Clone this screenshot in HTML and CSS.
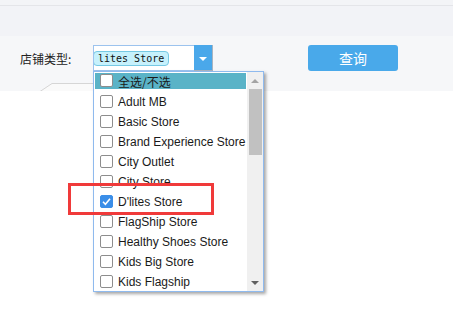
FILE: index.html
```html
<!DOCTYPE html>
<html>
<head>
  <title>店铺类型</title>
  <link rel="stylesheet" href="styles.css">
</head>
<body>
  <div class="topbar"><div class="topbarInner"></div></div>

  <div class="filter">
    <div class="filterRow">
      <span class="label">店铺类型:</span>
      <div class="select">
        <div class="selectInput"><span class="tag">lites Store</span></div>
        <div class="selectBtn"><span class="arrowDown"></span></div>

        <div class="dropdown">
          <ul class="options">
            <li class="all"><span class="box"></span>全选/不选</li>
            <li><span class="box"></span>Adult MB</li>
            <li><span class="box"></span>Basic Store</li>
            <li><span class="box"></span>Brand Experience Store</li>
            <li><span class="box"></span>City Outlet</li>
            <li><span class="box"></span>City Store</li>
            <li><span class="box checked"><svg width="13" height="13" viewBox="0 0 13 13"><path d="M3 6.8 L5.4 9.2 L10 3.8" fill="none" stroke="#fff" stroke-width="1.6"/></svg></span>D'lites Store</li>
            <li><span class="box"></span>FlagShip Store</li>
            <li><span class="box"></span>Healthy Shoes Store</li>
            <li><span class="box"></span>Kids Big Store</li>
            <li><span class="box"></span>Kids Flagship</li>
          </ul>
          <div class="scrollbar">
            <span class="sbUp"></span>
            <span class="sbThumb"></span>
            <span class="sbDown"></span>
          </div>
        </div>
      </div>
      <button class="query">查询</button>
    </div>
    <div class="tabs">
      <svg class="tab" width="180" height="8" viewBox="0 0 180 8"><path d="M0 8.5 L12 0.5 L179.5 0.5 L179.5 8.5" fill="#fafafa" stroke="#d6d6d6"/></svg>
    </div>
  </div>

  <div class="content"></div>

  <div class="redBox"></div>
</body>
</html>
```

FILE: styles.css
```css
body {margin: 0; font-family: "Liberation Sans", "Noto Sans CJK SC", sans-serif; background: #fff; color: #222;}
.topbar {height: 36px; padding-top: 5px; box-sizing: border-box; background: #f3f4f7; border-bottom: 1px solid #d2d2d4;}
.topbarInner {height: 30px; border-top: 1px solid #e4e5e9; background: #f2f3f7;}

.filter {background: #f6f7f9; height: 55px;}
.filterRow {display: flex; align-items: flex-start; padding: 9px 0 0 20px; height: 38px;}
.label {width: 73px; font-family: "Noto Sans CJK SC", sans-serif; font-size: 12px; line-height: 27px; color: #222;}

.select {position: relative; display: flex; width: 120px; height: 26px;}
.selectInput {width: 101px; height: 26px; box-sizing: border-box; border: 1px solid #9cc3ee; border-right: none; background: #fff; display: flex; align-items: center; overflow: hidden;}
.tag {margin-left: -1px; height: 15px; line-height: 14px; box-sizing: border-box; padding: 0 4px 0 4px; border: 1px solid #76c9e4; border-radius: 4px; background: #c6f1fc; font-family: "DejaVu Sans Mono", monospace; font-size: 10px; color: #111; white-space: nowrap;}
.selectBtn {width: 19px; height: 26px; box-sizing: border-box; background: #4aa8ea; border-right: 1px solid #a9b4c0; border-bottom: 1px solid #a9b4c0; display: flex; align-items: center; justify-content: center;}
.arrowDown {width: 0; height: 0; border-left: 4px solid transparent; border-right: 4px solid transparent; border-top: 4px solid #fff; margin-top: 2px;}

.query {margin-left: 95px; width: 90px; height: 26px; border: none; border-radius: 3px; background: #49a9ea; color: #fff; font-family: "Noto Sans CJK SC", sans-serif; font-size: 14px; padding: 0;}

.tabs {padding-left: 40px; height: 8px; display: flex;}
.tab {display: block;}

.dropdown {position: absolute; top: 26px; left: 0; width: 171px; height: 221px; box-sizing: border-box; border: 1px solid #8fbaee; background: #fff; display: flex; box-shadow: 2px 2px 3px rgba(0,0,0,0.35); z-index: 5;}
.options {list-style: none; margin: 0; padding: 1px 0 0 1px; width: 152px; overflow: hidden; font-size: 12px;}
.options li {display: flex; align-items: center; box-sizing: border-box; height: 16px; margin-bottom: 4px; padding-left: 5px; padding-top: 2px; white-space: nowrap; color: #1a1a1a;}
.options li.all {background: #5ab3c7; font-family: "Noto Sans CJK SC", sans-serif; padding-top: 0;}
.box {width: 13px; height: 13px; box-sizing: border-box; border: 1px solid #8d8d8d; border-radius: 2px; background: #fff; margin-right: 5px; margin-top: -1px; flex: none; display: flex;}
.box.checked {background: #3b8ee8; border-color: #3b8ee8;}
.box svg {margin: -1px;}

.scrollbar {position: relative; width: 16px; background: #f0f0f0; margin-left: 1px;}
.sbUp, .sbDown {position: absolute; left: 4px; width: 0; height: 0; border-left: 4px solid transparent; border-right: 4px solid transparent;}
.sbUp {top: 7px; border-bottom: 4px solid #a3a3a3;}
.sbDown {bottom: 6px; border-top: 4px solid #606060;}
.sbThumb {position: absolute; left: 2px; top: 17px; width: 13px; height: 66px; background: #c1c1c1;}

.content {height: 240px; background: #fff;}

.redBox {position: absolute; left: 68px; top: 183px; width: 146px; height: 32px; box-sizing: border-box; border: 3px solid #f03a3a; z-index: 10;}
```
